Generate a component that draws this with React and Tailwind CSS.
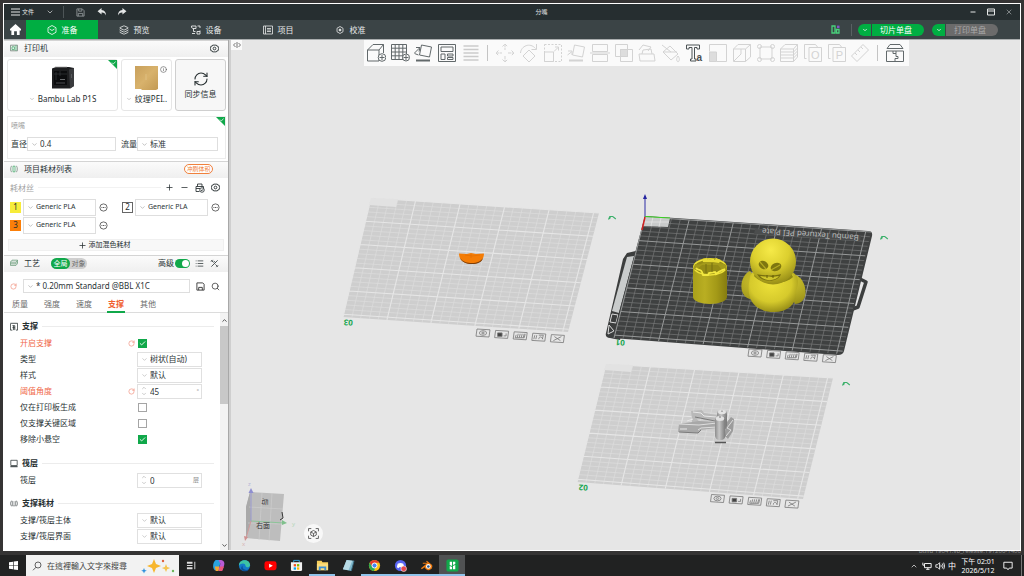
import React from "react";
import {
  ChevronDown, ChevronUp, Check, Plus, Minus, Info,
  List, Save, Search, X, RefreshCw, RotateCw, Layers,
} from "lucide-react";

const FONT = "font-['Noto_Sans','Noto_Sans_CJK_SC',sans-serif]";

function Svg({ className = "size-5", children, box = "0 0 20 20", sw = 1 }) {
  return (
    <svg viewBox={box} className={className} fill="none" stroke="currentColor" strokeWidth={sw} aria-hidden="true">
      {children}
    </svg>
  );
}

function Gear() {
  return (
    <Svg className="size-[9px]" sw="2">
      <path d="m6 2.500-1 2-3 .5-1 5 1 5 3 .5 1 2h8l1-2 3-.5 1-5-1-5-3-.5-1-2z" />
      <circle cx="10" cy="10" r="3" />
    </Svg>
  );
}

/* ---------- window chrome ---------- */

function TitleBar() {
  return (
    <header className="flex h-4 shrink-0 items-center bg-[#262e30] text-[#e4e6e6]">
      <div className="flex flex-1 items-center">
        <button className="ml-[7px] flex items-center gap-[2px] text-[6px]">
          <Svg className="h-2 w-[9px]" box="0 0 9 8"><path d="M0 1h9M0 4h9M0 7h9" /></Svg>
          文件
        </button>
        <button aria-label="展开菜单" className="ml-3"><ChevronDown className="size-2" /></button>
        <span className="ml-[9px] h-3 w-px bg-[#4d5557]" />
        <button aria-label="保存" className="ml-3 text-[#8f9597]"><Svg className="size-[9px]" sw="2"><path d="M2 2h12l4 4v12H2zM6 2v5h7V2M5 18v-6h10v6" /></Svg></button>
        <button aria-label="撤销" className="ml-3">
          <svg viewBox="0 0 10 9" className="h-2 w-[10px]" fill="currentColor"><path d="M4.5 0 0 3.7l4.5 3.7V5.2C7 5 8.500 6 9.500 8.500 9.700 5 8 2.500 4.500 2.200z" /></svg>
        </button>
        <button aria-label="重做" className="ml-[10px]">
          <svg viewBox="0 0 10 9" className="h-2 w-[10px]" fill="currentColor"><path d="M5.500 0 10 3.700 5.500 7.400V5.200C3 5 1.500 6 .500 8.500.300 5 2 2.500 5.500 2.200z" /></svg>
        </button>
      </div>
      <h1 className="ml-[66px] text-[6px]">分嘴</h1>
      <div className="flex flex-1 items-center justify-end gap-[10px] pr-[7px]">
        <button aria-label="最小化"><Svg className="size-2" box="0 0 8 8"><path d="M1.500 4h5" /></Svg></button>
        <button aria-label="最大化"><Svg className="size-2" box="0 0 8 8"><path d="M.500 1h7v6h-7zM.500 3h7" /></Svg></button>
        <button aria-label="关闭" className="text-[#a9adae]"><X className="size-2" /></button>
      </div>
    </header>
  );
}

const TABS = [
  ["准备", <Svg className="size-[10px]" sw="1.600"><path d="m10 1 8 4.500v9L10 19l-8-4.500v-9zM5 8l5 3 5-3" /></Svg>],
  ["预览", <Layers className="size-[10px]" />],
  ["设备", <Svg className="size-[10px]" sw="1.800"><path d="M1 2h9v5H4L1 5zM5 7v6h4M13 2h5v4M18 11v7h-6v-5h6M2 17h6" /></Svg>],
  ["项目", <Svg className="size-[10px]" sw="1.600"><path d="M1 2h18v16H1zM5 2v16M8 7h8M8 10h8M8 13h8" /></Svg>],
  ["校准", <Svg className="size-[10px]" sw="1.600"><path d="m10 3 6 3.500v7L10 17l-6-3.500v-7z" /><circle cx="10" cy="10" r="2" fill="currentColor" /></Svg>],
];

function SplitButton({ text, muted }) {
  return (
    <div className="flex h-3 w-[66px] overflow-hidden rounded-full text-[8px] leading-3">
      <button aria-label={text + "选项"} className="flex w-[13px] items-center justify-center bg-[#00ae42] text-white"><ChevronDown className="size-[6px]" strokeWidth={3} /></button>
      <button className={muted ? "ml-px flex-1 bg-[#6b6b6b] pr-1 text-[#a9a9a9]" : "ml-px flex-1 bg-[#00ae42] pr-1 text-white"}>{text}</button>
    </div>
  );
}

function NavBar() {
  return (
    <nav className="flex h-5 shrink-0 items-stretch border-b border-[#a9adae] bg-[#3b4446] text-[8px] text-[#e8eaea]">
      <button aria-label="主页" className="flex w-[22px] items-center justify-center text-white">
        <svg viewBox="0 0 12 12" className="size-[11px]" fill="currentColor"><path d="M6 0 0 5.500V7h1.500v5h3V8h3v4h3V7H12V5.500z" /></svg>
      </button>
      {TABS.map(([t, icon], i) => (
        <button key={t} className={"flex w-[72px] items-center justify-center gap-[5px] " + (i === 0 ? "bg-[#00ae42] text-white" : "")}>
          {icon}{t}
        </button>
      ))}
      <div className="flex flex-1 items-center justify-end pr-[22px]">
        <button aria-label="布局" className="mr-[11px]">
          <svg viewBox="0 0 9 9" className="size-[9px]" fill="none" strokeWidth="1.300"><path d="M1 1h3v7H1zM5.500 4.500H8V8H5.500z" stroke="#49d17c" /><path d="M6 .600h2.500V3H6z" fill="#8157c9" /></svg>
        </button>
        <span className="mr-[6px] h-3 w-px bg-[#596163]" />
        <SplitButton text="切片单盘" />
        <span className="w-2" />
        <SplitButton text="打印单盘" muted />
      </div>
    </nav>
  );
}

/* ---------- sidebar ---------- */

function SectionHead({ icon, title, children }) {
  return (
    <div className="flex h-[17px] shrink-0 items-center border-t border-[#d4d4d4] bg-gradient-to-b from-[#fbfbfb] to-[#efefef] pr-[9px] pb-[2px] pl-[6px] text-[8px] text-[#2b3436]">
      <span className="mr-[6px] flex size-2 text-[#7b8a81]">{icon}</span>
      <h2>{title}</h2>
      {children}
    </div>
  );
}

function Pick({ label, value, className = "", small }) {
  return (
    <span className={"flex items-center border border-[#dedede] bg-white pl-[3px] " + className}>
      <ChevronDown className="size-[7px] shrink-0 text-[#9a9a9a]" />
      <select aria-label={label} className={"ml-[2px] h-full min-w-0 flex-1 appearance-none bg-transparent text-[#2b3436] outline-none " + (small ? "text-[7px]" : "text-[8px]")}>
        <option>{value}</option>
      </select>
    </span>
  );
}

function Corner() {
  return (
    <svg viewBox="0 0 9 9" className="absolute top-0 right-0 size-[9px]" aria-hidden="true">
      <path d="M0 0h9v9z" fill="#10a84a" /><path d="m4 2.600 1.300 1.300L7.600 1.700" fill="none" stroke="#fff" strokeWidth=".8" />
    </svg>
  );
}

function PrinterArt() {
  return (
    <svg viewBox="0 0 24 23" className="h-[23px] w-6" aria-hidden="true">
      <path d="M1 2.500 5 1h13l5 1V20l-4 2.500H1z" fill="#1d1e20" />
      <path d="M18 3.500 23 2v18l-4 2.500z" fill="#3a3b3e" />
      <path d="M3 5h13v14H3z" fill="#0b0c0e" />
      <path d="M3 8h13M5 6v8M9 5v5" stroke="#3d4044" strokeWidth=".6" />
      <path d="M4 1.200h12" stroke="#777" strokeWidth=".8" />
      <path d="M5 17h9M20.500 8v4" stroke="#66686b" strokeWidth=".7" />
      <path d="M9 13h5v1H9z" fill="#6b6d70" />
    </svg>
  );
}

function Printer() {
  return (
    <>
      <SectionHead title="打印机" icon={<Svg className="size-2" sw="2.200"><path d="M1 3h18v14H1z" /><path d="M5 14V7h6v7zM15 3v14" stroke="#4fae74" /></Svg>}>
        <button aria-label="打印机设置" className="ml-auto"><Gear /></button>
      </SectionHead>
      <div className="mt-[2px] flex h-[52px] shrink-0 gap-[3px] pr-[2px] pl-[3px] text-[8px] text-[#262e30]">
        <button className="relative flex flex-1 flex-col items-center rounded-[3px] border border-[#e6e6e6] pt-[6px]">
          <PrinterArt />
          <span className="mt-1 flex items-center gap-[3px] leading-3"><ChevronDown className="size-[6px] text-[#999]" />Bambu Lab P1S</span>
          <Corner />
        </button>
        <button className="relative flex w-[51px] flex-col items-center rounded-[3px] border border-[#e6e6e6] pt-[6px]">
          <svg viewBox="0 0 23 24" className="h-6 w-[23px]" aria-hidden="true">
            <defs><linearGradient id="pei" x1="0" y1="0" x2="1" y2="1"><stop offset="0" stopColor="#c8a05c" /><stop offset=".5" stopColor="#d8b26c" /><stop offset="1" stopColor="#c39a54" /></linearGradient></defs>
            <path d="M0 0h23v23l-2 1H7l-1-1H0z" fill="url(#pei)" /><path d="M11 8v6" stroke="#e6cb92" strokeWidth=".6" />
          </svg>
          <Info className="absolute top-[6px] right-[4px] size-[7px] text-[#555]" />
          <span className="mt-[3px] flex items-center gap-[3px] leading-3 whitespace-nowrap"><ChevronDown className="size-[6px] text-[#999]" />纹理PEI..</span>
        </button>
        <button className="flex w-[51px] flex-col items-center rounded-[3px] border border-[#cfcfcf] bg-[#f7f7f7] pt-[11px]">
          <RefreshCw className="size-4" strokeWidth={1.6} />
          <span className="mt-px leading-3">同步信息</span>
        </button>
      </div>
      <div className="relative mt-[5px] mr-[2px] mb-[2px] ml-[3px] flex h-[43px] shrink-0 flex-col border border-[#ececec] px-[3px] pt-1 text-[8px] text-[#2b3436]">
        <span className="text-[7px] leading-[9px] text-[#999]">喷嘴</span>
        <div className="mt-[7px] flex h-[14px] items-center">
          <span className="w-4">直径</span>
          <Pick label="直径" value="0.4" className="h-[14px] flex-1" />
          <span className="ml-[5px] w-4">流量</span>
          <Pick label="流量" value="标准" className="mr-1 h-[14px] w-[81px]" />
        </div>
        <Corner />
      </div>
    </>
  );
}

function Dots() {
  return <Svg className="size-[9px]" sw="1.600"><circle cx="10" cy="10" r="8" /><path d="M5.500 10h2M9 10h2M12.500 10h2" strokeWidth="2" /></Svg>;
}

const FILAMENTS = [
  ["1", "bg-[#f7ec3a]"],
  ["2", "border border-[#666] bg-white"],
  ["3", "bg-[#fb7f09]"],
];

function Filaments() {
  return (
    <>
      <SectionHead title="项目耗材列表" icon={<Svg className="size-2" sw="2"><path d="M4 2c-3 4-3 12 0 16M16 2c3 4 3 12 0 16" /><path d="M7.500 3h5v14h-5z" stroke="#4fae74" /></Svg>}>
        <button className="mr-[6px] ml-auto h-[10px] w-[29px] rounded-full border border-[#f0803c] bg-white text-[6px] leading-[8px] text-[#f0803c]">冲刷体积</button>
      </SectionHead>
      <div className="flex h-5 shrink-0 items-center pr-2 pb-px pl-[6px] text-[8px] text-[#262e30]">
        <span className="text-[#a3a3a3]">耗材丝</span>
        <span className="ml-1 h-px flex-1 bg-[#f2f2f2]" />
        <button aria-label="添加耗材" className="ml-1"><Plus className="size-[9px]" /></button>
        <button aria-label="移除耗材" className="ml-[6px]"><Minus className="size-[9px]" /></button>
        <button aria-label="同步耗材" className="ml-[6px]"><Svg className="size-[10px]" sw="1.700"><path d="M5 7V2h9v5M2 7h15v4M2 7v10h7M2 11h8" /><circle cx="14" cy="14" r="4.500" /><path d="m12 14 2 1.500 2-3" /></Svg></button>
        <button aria-label="耗材设置" className="ml-[6px]"><Gear /></button>
      </div>
      <div className="grid shrink-0 grid-cols-[112px_1fr] pl-[6px]">
        {FILAMENTS.map(([n, c]) => (
          <div key={n} className="flex h-[18px] items-center">
            <span className={"flex size-[11px] items-center justify-center text-[8px] leading-none text-[#262e30] " + c}>{n}</span>
            <Pick small label={"耗材 " + n} value="Generic PLA" className="mr-[3px] ml-[2px] h-[17px] w-[73px]" />
            <button aria-label={"编辑耗材 " + n} className="text-[#333]"><Dots /></button>
          </div>
        ))}
      </div>
      <button className="mx-1 mt-[5px] mb-1 flex h-3 shrink-0 items-center justify-center gap-[2px] border border-[#f0f0f0] bg-[#f8f8f8] pr-6 text-[7px] text-[#262e30]">
        <Plus className="size-[9px]" />添加混色耗材
      </button>
    </>
  );
}

function Undo() {
  return <RotateCw className="size-[7px] text-[#f0806a]" />;
}

function Process() {
  return (
    <>
      <SectionHead title="工艺" icon={<Svg className="size-2" sw="2"><path d="M5 3h14l-4 5H1zM1 8v8h14l4-5V3M1 12h14l4-5" stroke="#6a9c7b" /></Svg>}>
        <div className="ml-[11px] flex h-[11px] w-9 rounded-full bg-[#cfcfcf] text-[7px] leading-[11px] text-[#6d6d6d]">
          <button className="w-[19px] rounded-full bg-[#10a84a] text-white">全局</button>
          <button className="flex-1">对象</button>
        </div>
        <label htmlFor="adv" className="ml-auto">高级</label>
        <span className="ml-px flex h-[9px] w-[15px] items-center justify-end rounded-full bg-[#10a84a] p-px">
          <input id="adv" type="checkbox" defaultChecked className="size-[7px] appearance-none rounded-full bg-white" />
        </span>
        <button aria-label="列表" className="ml-[5px]"><List className="size-[9px]" /></button>
        <button aria-label="对比" className="ml-[6px]"><Svg className="size-[9px]" sw="1.800"><path d="m3 17 14-14M3 3l5 5M12 12l5 5" /><path d="M2 6 6 2M14 18l4-4M8 4l4 4" /></Svg></button>
      </SectionHead>
      <div className="mt-[7px] flex h-[14px] shrink-0 items-center pr-2 pl-[6px] text-[#333]">
        <button aria-label="重置预设"><Undo /></button>
        <Pick label="工艺预设" value="* 0.20mm Standard @BBL X1C" className="ml-[6px] h-[14px] flex-1" />
        <button aria-label="保存预设" className="ml-[6px]"><Svg className="size-[9px]" sw="2"><path d="M2 2h13l3 3v13H2zM6 18v-6h8v6" /></Svg></button>
        <button aria-label="搜索" className="ml-[6px]"><Search className="size-[9px]" /></button>
      </div>
      <div className="mt-[3px] flex h-[17px] shrink-0 gap-4 border-b border-[#dcdcdc] pl-2 text-[8px] text-[#6b6b6b]">
        {["质量", "强度", "速度", "支撑", "其他"].map((t) => (
          <button key={t} className={t === "支撑" ? "-mx-px -mb-px border-b-2 border-[#10a84a] px-px pt-px font-bold text-[#f0602f]" : "pb-px"}>{t}</button>
        ))}
      </div>
      <Params />
    </>
  );
}

function Group({ icon, title }) {
  return (
    <div className="flex h-[18px] items-center pl-[6px] text-[8px] font-bold text-[#262e30]">
      <span className="mr-1 flex size-2">{icon}</span>
      <h3>{title}</h3>
      <span className="mr-[6px] ml-1 h-px flex-1 bg-[#ececec]" />
    </div>
  );
}

function Param({ id, label, hot, kind, value, unit }) {
  return (
    <div className="flex h-4 items-center pl-4">
      <label htmlFor={id} className={"w-[108px] text-[8px] " + (hot ? "text-[#f0694a]" : "text-[#2b3436]")}>{label}</label>
      <span className="flex w-[10px]">{hot && <Undo />}</span>
      {kind === "check" && (
        <span className="grid size-[9px] place-items-center">
          <input id={id} type="checkbox" defaultChecked={value} className="col-start-1 row-start-1 size-[9px] appearance-none border border-[#a5a5a5] bg-white checked:border-[#10a84a] checked:bg-[#10a84a]" />
          {value && <Check className="pointer-events-none z-10 col-start-1 row-start-1 size-[7px] text-white" strokeWidth={3} />}
        </span>
      )}
      {kind === "pick" && (
        <span className="-ml-px flex h-[15px] w-[65px] items-center border border-[#e0e0e0] pl-[3px]">
          <ChevronDown className="size-[7px] shrink-0 text-[#aaa]" />
          <select id={id} className="ml-[2px] h-full min-w-0 flex-1 appearance-none bg-transparent text-[8px] text-[#2b3436] outline-none"><option>{value}</option></select>
        </span>
      )}
      {kind === "num" && (
        <span className="-ml-px flex h-[15px] w-[65px] items-center border border-[#e0e0e0] pr-[2px] pl-[2px] text-[6px] text-[#888]">
          <span className="flex w-[7px] flex-col items-center text-[#999]"><ChevronUp className="size-[6px]" /><ChevronDown className="size-[6px]" /></span>
          <input id={id} defaultValue={value} className="ml-[3px] h-full w-full min-w-0 flex-1 bg-transparent text-[8px] text-[#2b3436] outline-none" />
          {unit}
        </span>
      )}
    </div>
  );
}

function Params() {
  return (
    <div className="flex min-h-0 flex-1 overflow-hidden">
      <div className="min-w-0 flex-1 pt-1">
        <Group title="支撑" icon={<Svg className="size-[9px]" sw="2"><path d="M1 3v16h5M1 2h18v17h-4M6 8h6v11M9 8v11M6 13h6" /></Svg>} />
        <Param id="s1" label="开启支撑" hot kind="check" value={true} />
        <Param id="s2" label="类型" kind="pick" value="树状(自动)" />
        <Param id="s3" label="样式" kind="pick" value="默认" />
        <Param id="s4" label="阈值角度" hot kind="num" value="45" unit="°" />
        <Param id="s5" label="仅在打印板生成" kind="check" value={false} />
        <Param id="s6" label="仅支撑关键区域" kind="check" value={false} />
        <Param id="s7" label="移除小悬空" kind="check" value={true} />
        <div className="h-[7px]" />
        <Group title="筏层" icon={<Svg className="size-[9px]" sw="1.800"><path d="M2 2h16v13H2z" /><path d="M1 18h18" strokeWidth="2.500" /></Svg>} />
        <Param id="r1" label="筏层" kind="num" value="0" unit="层" />
        <div className="h-[6px]" />
        <Group title="支撑耗材" icon={<Svg className="size-[9px]" sw="1.600"><path d="M4 3c-3 4-3 10 0 14M16 3c3 4 3 10 0 14M7 4v12h2M13 4v12h-2" /></Svg>} />
        <Param id="f1" label="支撑/筏层主体" kind="pick" value="默认" />
        <Param id="f2" label="支撑/筏层界面" kind="pick" value="默认" />
      </div>
      <div className="flex w-2 flex-col items-center justify-between bg-[#f3f3f3] pt-1 pb-px text-[#444]" aria-hidden="true">
        <ChevronUp className="size-[7px] shrink-0" strokeWidth={3} />
        <span className="mt-[2px] h-[78px] w-full shrink-0 bg-[#c8c8c8]" />
        <span className="flex-1" />
        <ChevronDown className="size-[7px] shrink-0" strokeWidth={3} />
      </div>
    </div>
  );
}

/* ---------- 3D view ---------- */

function gridPaths(tl, tr, br, bl) {
  const mix = (a, b, t) => [a[0] + (b[0] - a[0]) * t, a[1] + (b[1] - a[1]) * t];
  let minor = "", major = "";
  for (let i = 0; i <= 25; i++) {
    const t = i / 25.6;
    const a = mix(tl, tr, t), b = mix(bl, br, t), c = mix(tl, bl, t), d = mix(tr, br, t);
    const seg = `M${a}L${b}M${c}L${d}`;
    if (i % 5 === 0) major += seg; else minor += seg;
  }
  return { minor, major, face: `M${tl}L${tr}L${br}L${bl}Z` };
}

const LEFT = gridPaths([371, 198], [599, 213], [568, 332], [343, 317]);
const MAIN = gridPaths([645, 217], [871, 232], [842, 354], [614, 338]);
const LOW = gridPaths([606, 364], [833, 378], [803, 499], [577, 482]);

function Plate({ g, notch }) {
  return (
    <g>
      <path d={g.face} fill="#cecece" />
      <path d={g.minor} stroke="#dcdcdc" strokeWidth=".7" />
      <path d={g.major} stroke="#e6e6e6" strokeWidth="1.100" />
      <path d={notch} fill="#e2e2e2" />
    </g>
  );
}

function PlateTools({ x, y }) {
  const inner = [
    <g key="a"><ellipse cx="0" cy="0" rx="3.600" ry="2.300" /><ellipse cx="0" cy="0" rx="1.300" ry=".9" /></g>,
    <g key="b"><path d="M-4-1.500h4.500v3.500h-4.500z" fill="#444" /><path d="M2 1.500h2.500V-1" /></g>,
    <path key="c" d="m-5 2 1-3M-3 2l1-4M-1 2l1-4M1 2l1-4M3 2l1-4M5-2 4 2h-9" />,
    <path key="d" d="m-5 2 1-4M-3 2l1-4M0-2h4.500l-1 4M0 2c0-3 3-3 4 0" />,
    <path key="e" d="m-3-2 6 4M4-2l-8 4" />,
  ];
  return inner.map((s, i) => (
    <g key={i} transform={`translate(${x + i * 18.6} ${y + i * 1.4})`} fill="none" stroke="#777" strokeWidth=".8">
      <path d="m-6-4 13 .8L6 4l-13-.8z" />{s}
    </g>
  ));
}

function Pencil({ x, y }) {
  return <path transform={`translate(${x} ${y})`} d="m-3.500 1.500 1.300-3h3l3 2.500M-1.500-1.500-2.500 1" fill="none" stroke="#3bb06a" strokeWidth="1.100" />;
}

function Duck() {
  return (
    <g>
      <path d="M693 267c0-5 7-9 17-9s17 4 17 9v30c0 4-8 7-17 7s-17-3-17-7z" fill="url(#tube)" />
      <ellipse cx="710" cy="267" rx="16" ry="8" fill="#948b16" stroke="#efe33a" strokeWidth="1.500" />
      <path d="M695 264c4 1 7 0 9-2l-2-3 5-1 1 2h6l1-2 5 2-1 3c3 1 6 0 7 2l1 5-5 0-4-5h-16l-6 5-3-1z" fill="#a39a1b" />
      <path d="M702 259l5-1 1 2h7l1-2 5 2-2 3-6-1h-6l-4 0z" fill="#e6da35" />
      <path d="M696 268c2 3 5 1 6 4l1 3 5 0 1-2 6-1 1 2c3-3 4-3 9-5" fill="none" stroke="#f2e740" strokeWidth="1.800" />
      <path d="M706 264v9M712 263v9" stroke="#756e10" />
      <path d="M750 271c-7 3-10 13-8 20 2 6 6 8 9 8l3-5-1-19zM796 275c7 3 11 13 9 21-1 5-6 8-10 8l-4-9z" fill="url(#wing)" />
      <path d="M750 277c0-6 11-9 24-9s24 4 24 13c0 5-1 7-2 11 1 12-8 20-22 20-16 0-24-9-25-19-1-6 0-10 1-16z" fill="url(#body)" />
      <path d="M754 276c7 9 32 9 39 1l-3-5h-34z" fill="#8f8714" />
      <circle cx="773" cy="261.500" r="23" fill="url(#head)" />
      <ellipse cx="763.500" cy="265" rx="5" ry="4" transform="rotate(28 763.500 265)" fill="#7e7610" />
      <ellipse cx="776" cy="267" rx="5.500" ry="4" transform="rotate(-20 776 267)" fill="#7e7610" />
      <path d="m760 262 6 7M771 270l9-5" stroke="#b5ab22" strokeWidth="1.200" />
      <path d="M757 274c6 2 17 2 24 0-2 8-19 10-24 0z" fill="#786f0e" />
      <path d="M760 276c5 1 8 0 12 1l7-1c-3 5-14 6-19 0z" fill="#cfc52b" />
      <path d="M767 275v3M773 275v3" stroke="#655d08" />
    </g>
  );
}

function Scene() {
  return (
    <svg viewBox="231 40 789 510" preserveAspectRatio="xMinYMin slice" className="block size-full" role="img" aria-label="模型视图" fill="none">
      <defs>
        <linearGradient id="tube"><stop offset="0" stopColor="#a9a01a" /><stop offset=".35" stopColor="#b9ae22" /><stop offset=".7" stopColor="#a39917" /><stop offset="1" stopColor="#857c10" /></linearGradient>
        <radialGradient id="head" cx=".45" cy=".25" r=".8"><stop offset="0" stopColor="#f6ea48" /><stop offset=".5" stopColor="#dccf2e" /><stop offset="1" stopColor="#8d8414" /></radialGradient>
        <radialGradient id="body" cx=".45" cy=".35" r=".7"><stop offset="0" stopColor="#eee23a" /><stop offset=".6" stopColor="#d6ca2c" /><stop offset="1" stopColor="#8e8514" /></radialGradient>
        <radialGradient id="wing" cx=".5" cy=".3" r=".8"><stop offset="0" stopColor="#e8dc38" /><stop offset="1" stopColor="#978e17" /></radialGradient>
        <linearGradient id="pin"><stop offset="0" stopColor="#8d8d8d" /><stop offset=".4" stopColor="#c6c6c6" /><stop offset="1" stopColor="#777" /></linearGradient>
      </defs>

      <Plate g={LEFT} notch="M371 198l27 1-2 8-27-2z" />
      <Plate g={LOW} notch="M606 364l27 1-2 7-27-2z" />

      <path d="M640 250l-13 3-4 6-17 74c-1 3 1 5 4 5l10 2z" fill="#3c3e3e" />
      <path d="M627 257l7-1-15 57-7-2z" fill="#c9cccc" />
      <path d="M612 314l6 1-2 8-6-1zM609 325l5 6-6 3z" stroke="#ddd" strokeWidth="1" />
      <path d="M860 279l6 3-8 25-8 3" stroke="#3c3e3e" strokeWidth="3.500" strokeLinejoin="round" />
      <path d="M645 216l223 15q5 0 4 5l-28 115q-1 4-6 4l-226-17z" fill="#3f4141" />
      <path d={MAIN.minor} stroke="#777979" strokeWidth=".7" />
      <path d={MAIN.major} stroke="#979999" strokeWidth="1" />
      <path d="M645 217l25 1-2 9-25-1z" fill="#c9cbcb" />
      <path d="M653 217l-2 9M661 218l-2 9M644 222h25" stroke="#eee" strokeWidth=".6" />
      <path d="M755 229l106 7-1 5-106-7z" fill="#4b4d4d" />
      <text transform="translate(859 235) rotate(184)" fontSize="8" fill="#b9baba" className="font-['Noto_Sans',sans-serif]">Bambu Textured PEI Plate</text>
      <path d="M645 217v-20" stroke="#2c2ca5" /><path d="m643 199 2-5 2 5z" fill="#2424a0" />
      <path d="M645 216.500l25 1.500" stroke="#39d321" /><path d="M645 217l-3 13" stroke="#d12020" strokeWidth="1.500" />

      <PlateTools x={483} y={333} />
      <PlateTools x={755} y={353} />
      <PlateTools x={717.5} y={498.5} />
      <Pencil x={612} y={218} /><Pencil x={884} y={238} /><Pencil x={846} y={384} />
      {[["03", 353, 320], ["01", 625, 340], ["02", 588, 485]].map(([t, x, y]) => (
        <text key={t} transform={`translate(${x} ${y}) rotate(184)`} fontSize="8" fontWeight="700" fill="#18a651" className="font-['Noto_Sans',sans-serif]">{t}</text>
      ))}

      <path d="M459 253.500l8 .5 4-1 5 1 8-.5c0 6-4 10-12 10.500-8 0-13-4-13-10.500z" fill="#f47c05" />
      <path d="M460 258c3 4 7 5 12 5s9-2 11-5c-1 4-5 6-11 6s-10-2-12-6z" fill="#7d3d08" />
      <path d="M465 255l7 1 8-1M471 254v4" stroke="#dd6c04" strokeWidth=".6" />

      <Duck />

      <path d="M691 411l11-1 2 3 13 2v6l-13-1-3-2-4 1 3 4-8 1v-5z" fill="#b9b9b9" />
      <path d="M679 424l20-3 18 1v6l-17 2-2 3-20-1z" fill="#a8a8a8" />
      <path d="M679 424l20 1 18-2v4l-16 1-3 2" stroke="#dedede" /><path d="M693 412l8 1 3 3 12 1M680 429h7M687 421l6-2" stroke="#e8e8e8" />
      <path d="M679 432l19 1 3-3M695 417l20 4" stroke="#7b7b7b" />
      <path d="M731 417l3 2-1 12-5 8-3-3 2-14z" fill="#9c9c9c" /><path d="M733 420l-6 8 4 2-5 6" stroke="#ddd" />
      <rect x="717" y="410" width="10" height="20" rx="4.500" fill="url(#pin)" />
      <path d="M714 438h12v5h-12z" fill="#ccc" /><path d="M715 442.500h11" stroke="#555" strokeWidth="1.500" />
      <rect x="715" y="416" width="10.500" height="24" rx="4.500" fill="url(#pin)" />
      <ellipse cx="722" cy="412" rx="4" ry="2.200" fill="#e4e4e4" /><ellipse cx="720" cy="418.500" rx="4.200" ry="2.500" fill="#e2e2e2" /><path d="M720 416v2M722 410.500v1.500" stroke="#777" />

      <path d="M250 492l34 2-4 47-34-3v-31z" fill="#bdbdbd" /><path d="M250 492l-4 15v31l5-17z" fill="#a9a9a9" />
      <path d="M262 493l-3 47M272 493l-3 48M249 507l34 2M248 523l34 1" stroke="#d0d0d0" strokeWidth=".6" />
      <path d="M251 522v-32" stroke="#9a9ad0" /><path d="m248.500 493 2.500-5 2.500 5z" fill="#8f8fd0" />
      <path d="M251 521l33 2" stroke="#8cc498" /><path d="m282 520 5 3-5 2z" fill="#7fc08c" />
      <path d="M251 521l-5 17" stroke="#d09a9a" /><path d="m244 536 4 1-3 4z" fill="#d08f8f" />
      <g className="font-['Noto_Sans','Noto_Sans_CJK_SC',sans-serif]" fontSize="7" fill="#333">
        <text x="256" y="528">右面</text>
        <text transform="translate(263 498) rotate(98)">后</text>
        <text x="248" y="486" fontSize="6" fill="#b4b4d6">z</text>
        <text x="292" y="526" fontSize="6" fill="#b7d6bb">y</text>
        <text x="242" y="546" fontSize="6" fill="#d6b4b4">x</text>
      </g>
      <path d="M282 512l1 6-3 2" stroke="#333" />
    </svg>
  );
}

const TOOLS_MAIN = [
  ["添加", <><path d="M1.500 7h11.500v11H1.500zM1.500 7 7 1.500h10.500L13 7M17.500 1.500V10" /><circle cx="16" cy="14.500" r="3.800" fill="#fafafa" /><path d="M13.500 14.500h5M16 12v5" /></>],
  ["添加盘", <><path d="M1.500 1.500h15v15h-15zM1.500 5.200h15M1.500 9h15M1.500 12.800h15M5.200 1.500v15M9 1.500v15M12.800 1.500v15" /><circle cx="16" cy="14.500" r="3.500" fill="#fafafa" /><path d="M13.500 14.500h5M16 12v5" /></>],
  ["自动朝向", <><path d="m8.500 2 10 2-2 10-10-2zM1.500 10l5-5M3 4.500l4 0-1 4M1.500 10.500l4 1.500" /><path d="M3 17.500h14" strokeWidth="2" /></>],
  ["自动摆盘", <><path d="M1.500 1.500h17v17h-17z" /><path d="M4 4h12v4.500H4zM4 11h4v5.500H4zM10.500 11H16v2h-5.500zM10.500 14.500H16v2h-5.500z" /></>],
];
const TOOLS_EDIT = [
  ["移动", <path d="M10 1v6M10 13v6M1 10h6M13 10h6M7.500 3.500 10 1l2.500 2.500M7.500 16.500 10 19l2.500-2.500M3.500 7.500 1 10l2.500 2.500M16.500 7.500 19 10l-2.500 2.500" strokeDasharray="3 .6" />],
  ["旋转", <path d="m10 7 6 6-6 6-6-6zM1.500 10C2 3 11-1 16.500 5.500M17.500 1v5.500h-5" />],
  ["缩放", <><path d="M1.500 1.500h17v17h-17z" strokeDasharray="2 1.500" /><path d="M1.500 9h9v9.500h-9zM11 8.500l4-4M12 4h3.500v3.500" /></>],
  ["放置面", <><path d="m8.500 2 10 2-2 10-10-2zM1.500 12l4-3M2 8h4v4" /><path d="M3 17.500h14" strokeWidth="2" /></>],
  ["切割", <path d="M2.500 1.500h15v7h-15zM2.500 11.500h15v7h-15zM0 10h20" />],
  ["布尔", <><path d="M1.500 1.500h12v12h-12zM6.500 6.500h12v12h-12z" /><path d="M6.500 6.500h7v7h-7z" fill="#ddd" /></>],
  ["支撑绘制", <path d="M2 11h15l1 7H3zM5 11l1-4 8-1 1 5M2 7l4-5 8 2-3 4" />],
  ["颜色绘制", <path d="m9 3 8 8-7 6-8-8zM1 2l9 7M2 9h14M17 13c3 4 0 6 0 6s-3-2 0-6" />],
  ["文字", null],
  ["浮雕", <><path d="M1.500 1.500h17v17h-10M1.500 1.500v7" /><path d="M1.500 9h7v9.500h-7z" fill="#ddd" /></>],
  ["立方体", <path d="M1.500 6h12v12.500h-12zM1.500 6 6 1.500h12.500L13.500 6M18.500 1.500V14l-5 4.500M9 6v5l-7 7" />],
  ["网格", <><path d="M4 4h12v12H4z" /><circle cx="3.500" cy="3.500" r="2" /><circle cx="16.500" cy="3.500" r="2" /><circle cx="3.500" cy="16.500" r="2" /><circle cx="16.500" cy="16.500" r="2" /></>],
  ["层高", <path d="M1.500 6h13v12.500h-13zM1.500 6 6 1.500h12.500L14.500 6M18.500 1.500V14l-4 4.500M1.500 9h13l4-4M1.500 12h13l4-4M1.500 15h13l4-4" />],
  ["O", "letter"],
  ["P", "letter"],
  ["测量", <path d="M1.500 13 13 1.500l5.500 5.500L7 18.500zM5 10l2 2M8 7l2 2M11 4l2 2" />],
];

function Toolbar() {
  return (
    <div className="absolute top-0 left-[133px] flex h-[26px] w-[545px] items-center justify-between bg-[#fafafa] pr-1 pl-[2px] text-[#62696b]">
      {TOOLS_MAIN.map(([n, d]) => <button key={n} aria-label={n}><Svg>{d}</Svg></button>)}
      <button aria-label="可变层高" className="text-[#cbcbcb]"><Svg><path d="M2.500 3h15M2.500 6.500h15M2.500 10h15M2.500 13.500h15M2.500 17h15" strokeWidth="1.500" /></Svg></button>
      <span className="mx-[3px] h-4 w-px bg-[#c4c4c4]" />
      {TOOLS_EDIT.map(([n, d]) => (
        <button key={n} aria-label={n} className={d === null ? "text-[#4b5254]" : "text-[#d3d3d3]"}>
          {d === null ? (
            <Svg><path d="M1.500 2h13v4H12V4.500H9.500V16h1.500v2H5.500v-2H7V4.500H4V6H1.500z" /><text x="11.500" y="18" fontSize="10" fontWeight="700" stroke="none" fill="currentColor" className="font-['Liberation_Sans',sans-serif]">a</text></Svg>
          ) : d === "letter" ? (
            <Svg><path d="M6 4.500h12.500v14H6zM3.500 15.500h-2v-14h11l2 2.500" /><text x="12.300" y="15.500" textAnchor="middle" fontSize="11" stroke="none" fill="currentColor" className="font-['Liberation_Sans',sans-serif]">{n}</text></Svg>
          ) : <Svg>{d}</Svg>}
        </button>
      ))}
      <span className="mx-[3px] h-4 w-px bg-[#c4c4c4]" />
      <button aria-label="装配视图"><Svg><path d="M5 1.500h10l3 4H2zM1.500 8h17v10.500h-17zM8 8v2.500h3v3h2v2h-3v3M11 8v2.500" /></Svg></button>
    </div>
  );
}

/* ---------- taskbar ---------- */

const APPS = [
  ["工作检视", false, <path d="M1 3h6v2H1zM1 6.500h6v1H1zM1 9h6v2H1zM9 3h1v8H9z" fill="#ddd" />],
  ["Copilot", false, <><path d="M4 1h4l1 3-2 8H3C0 10 1 3 4 1z" fill="#29a3e0" /><path d="M7 1h3c3 1 4 3 3 6l-2 5H7l2-7z" fill="#b85bd6" /><path d="M3 8h5l-1 5H4z" fill="#f3a532" /><path d="M9 8h4l-2 5H7z" fill="#e9557a" /></>],
  ["Edge", false, <><circle cx="7" cy="7" r="6" fill="#1379c8" /><path d="M1 7c0-7 12-8 12 0-1 3-5 2-5 0 0-3-5-3-7 0z" fill="#3cc4a4" /><path d="M5 7c-1 4 3 6 7 4-4 5-12 1-7-4z" fill="#0b4f96" /></>],
  ["YouTube", false, <><rect x=".5" y="2.500" width="13" height="9.500" rx="2.500" fill="#f00" /><path d="m5.500 5 4 2.200-4 2.200z" fill="#fff" /></>],
  ["Store", false, <><path d="M4 4V1.500h6V4" fill="none" stroke="#32a8e0" /><path d="M1 3.500h12V12l-1 1H2l-1-1z" fill="#f2f2f2" /><path d="M4 5.500h2.500V8H4z" fill="#f25022" /><path d="M7.500 5.500H10V8H7.500z" fill="#7fba00" /><path d="M4 9h2.500v2.500H4z" fill="#00a4ef" /><path d="M7.500 9H10v2.500H7.500z" fill="#ffb900" /></>],
  ["文件管理器", true, <><path d="M1 2h5l1 1.500h6V12H1z" fill="#f7cf5b" /><path d="M1 5h12v7H1z" fill="#fbdc7c" /><path d="M3 12V8h8v4H9v-2H5v2z" fill="#3f8fd2" /></>],
  ["记事本", false, <><path d="m5 1 8 1-3 11-9-2z" fill="#7fb8cc" /><path d="m5 1 6 1-4 10-6-1z" fill="#b7dbe6" /><path d="m10 13 3-11" stroke="#39667a" /></>],
  ["Chrome", true, <><circle cx="7" cy="7" r="6" fill="#fbc116" /><path d="M7 1a6 6 0 0 1 5.200 3H7L4.300 8.500 1.800 4A6 6 0 0 1 7 1z" fill="#e33b2e" /><path d="m1.800 4 3 5 3 .8L6.500 13A6 6 0 0 1 1.800 4z" fill="#2da94f" /><circle cx="7" cy="7" r="2.700" fill="#4285f4" stroke="#fff" /></>],
  ["Discord", true, <><rect x="1" y="1" width="12" height="12" rx="6" fill="#5865f2" /><path d="M4 5q3-1.500 6 0l1 4-2 1-.5-1h-3L5 10 3 9z" fill="#fff" /><circle cx="10.500" cy="10.500" r="3" fill="#e5484d" stroke="#fff" strokeWidth=".6" /></>],
  ["Blender", true, <><path d="m1 10 6-5H3V4h5L6.500 2.500l1-.5L13 6.500a4 4 0 1 1-8 2.500l-3 2z" fill="#ea7a12" /><circle cx="9" cy="8" r="2.500" fill="#fff" /><circle cx="9" cy="8" r="1.400" fill="#245a93" /></>],
  ["Bambu Studio", true, <><rect x=".5" y=".5" width="13" height="13" rx="2" fill="#10a84a" /><path d="M4 3h2.500v4.500L4 6.500zM4 7.500l2.500 1V11H4zM7.500 3H10v2.500L7.500 6.500zM7.500 7.500 10 6.500V11H7.500z" fill="#fff" /></>],
];

function Taskbar() {
  return (
    <footer className="flex h-[21px] shrink-0 items-stretch bg-[#212222] text-white">
      <button aria-label="开始" className="flex w-[26px] items-center justify-center">
        <svg viewBox="0 0 10 10" className="size-[9px]" fill="#fff"><path d="M0 1.300 4.500.700v4H0zM5.200.600 10 0v4.700H5.200zM0 5.300h4.500v4L0 8.700zM5.200 5.300H10V10l-4.800-.6z" /></svg>
      </button>
      <label className="flex w-[153px] items-center bg-[#f2f2f2] pl-[6px] text-[#333]">
        <Svg className="size-[10px] shrink-0" sw="1.500"><circle cx="12" cy="8" r="6" /><path d="m8 12.500-6 6" /></Svg>
        <input aria-label="搜尋" placeholder="在這裡輸入文字來搜尋" className="ml-[5px] w-full min-w-0 flex-1 bg-transparent font-['Noto_Sans_CJK_TC',sans-serif] text-[8px] outline-none placeholder:text-[#444]" />
        <svg viewBox="0 0 34 16" className="mr-1 h-4 w-[34px] shrink-0" aria-hidden="true">
          <path d="m13 1 2 5 5 2-5 2-2 5-2-5-5-2 5-2z" fill="#f7b62d" /><path d="m25 6 1.200 3 3 1-3 1.200L25 14l-1.200-2.800-3-1.200 3-1z" fill="#f5c451" />
          <path d="m3 10 .8 2 2 .8-2 .8L3 15.500l-.8-1.900-2-.8 2-.8z" fill="#2c8fdc" /><circle cx="22" cy="3" r="1.200" fill="#e0603a" /><circle cx="32" cy="13" r="1.200" fill="#6bb557" />
        </svg>
      </label>
      {APPS.map(([n, open, art], i) => (
        <button key={n} aria-label={n} className={"flex w-[26px] items-center justify-center border-b-2 pt-[2px] " + (open ? "border-[#8fc3ea] " : "border-transparent ") + (i === 10 ? "bg-[#505253]" : "")}>
          <svg viewBox="0 0 14 14" className="size-[13px]">{art}</svg>
        </button>
      ))}
      <div className="flex flex-1 items-center justify-end pr-[2px]">
        <button aria-label="显示隐藏图标"><ChevronUp className="size-2" /></button>
        <Svg className="ml-1 size-[10px]" box="0 0 12 12" sw="1.100"><path d="M3 3h8v5H3zM1 2v3h2M7 8v2M5 10h4" /></Svg>
        <Svg className="ml-[3px] size-[10px]" box="0 0 12 12" sw="1"><path d="M1 4.500h2L5.500 2v8L3 7.500H1zM7 4.500q1 1.500 0 3M8.700 3q2 3 0 6M10.400 2q2.500 4 0 8" /></Svg>
        <span className="ml-[3px] text-[8px]">中</span>
        <time className="ml-[5px] flex w-[34px] flex-col items-center text-[7px] leading-[9px]"><span>下午 02:01</span><span>2026/5/12</span></time>
        <button aria-label="通知" className="ml-2"><Svg className="size-[10px]" box="0 0 12 12" sw="1.100"><path d="M1 1.500h10v7H7.500L6 10.500l-1.500-2H1z" /></Svg></button>
        <span className="ml-2 h-full w-px bg-[#777]" />
      </div>
    </footer>
  );
}

export default function App() {
  return (
    <div className={"flex h-screen flex-col overflow-hidden bg-[#353434] " + FONT}>
      <main className="mx-[3px] mt-[3px] flex min-h-0 flex-1 flex-col border border-white bg-white">
        <TitleBar />
        <NavBar />
        <div className="flex min-h-0 flex-1">
          <aside className="flex w-[224px] shrink-0 flex-col bg-white">
            <Printer />
            <Filaments />
            <Process />
          </aside>
          <span className="w-[3px] shrink-0 border-l border-[#a8a8a8] bg-[#cfcfcf]" />
          <section className="relative min-w-0 flex-1 overflow-hidden bg-[#e6e6e6]">
            <Scene />
            <button aria-label="收起侧栏" className="absolute top-0 left-0 flex h-[10px] w-[11px] items-center justify-center bg-[#fafafa] text-[#555]">
              <Svg className="size-2" box="0 0 8 8" sw=".8"><path d="M2.500 2 .500 4l2 2M4 1v6M5.500 2l2 2-2 2" /></Svg>
            </button>
            <Toolbar />
            <button aria-label="适应视图" className="absolute bottom-[7px] left-[73px] flex size-[19px] items-center justify-center rounded-full bg-[#f8f8f8] text-[#555]">
              <Svg className="size-[11px]" sw="1.600"><path d="M1 6V1h5M14 1h5v5M19 14v5h-5M6 19H1v-5M10 4.500l5 2.700v5.600l-5 2.700-5-2.700V7.200zM5 7.200l5 2.800 5-2.800M10 10v5.500" /></Svg>
            </button>
          </section>
        </div>
      </main>
      <div className="flex h-1 shrink-0 justify-end overflow-hidden pr-[3px]">
        <span className="-mt-[3px] text-[6px] leading-[6px] text-[#8c8c8c]">Build 19041.vb_release.191206-1406</span>
      </div>
      <Taskbar />
    </div>
  );
}
